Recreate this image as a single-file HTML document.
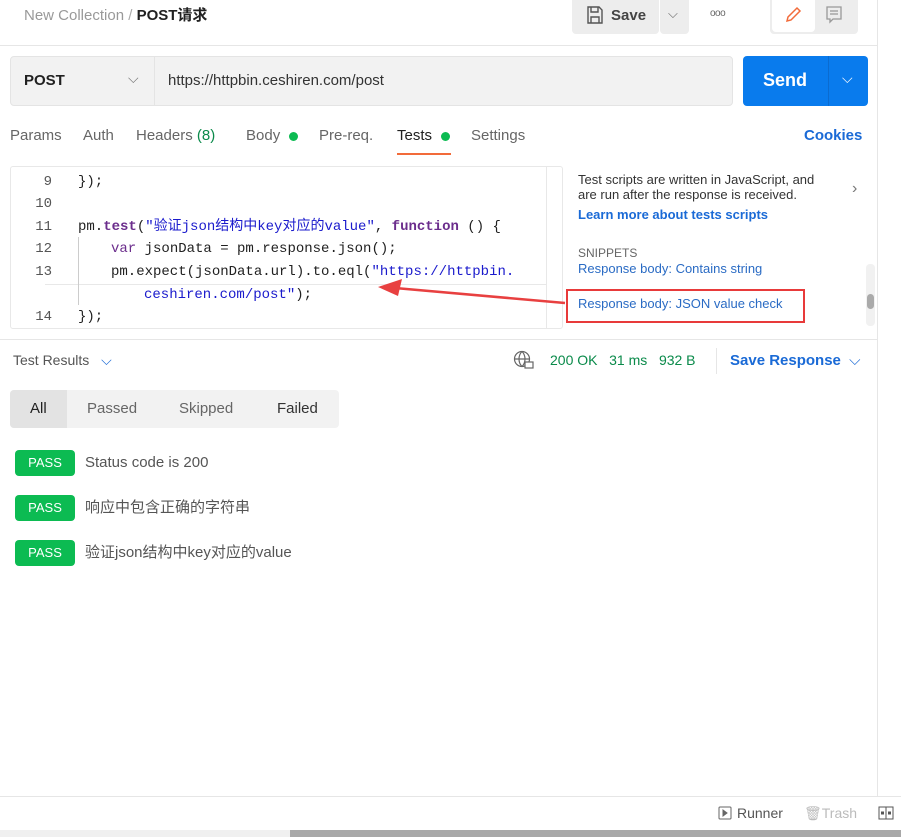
<!DOCTYPE html>
<html><head><meta charset="utf-8"><style>
*{box-sizing:border-box;margin:0;padding:0}
body{width:901px;height:837px;overflow:hidden;background:#fff;font-family:"Liberation Sans","Noto Sans CJK SC",sans-serif;position:relative;color:#212121}
.a{position:absolute}
.mono{font-family:"Liberation Mono","Noto Sans CJK SC",monospace;font-size:14px;line-height:18px;height:18px}
.ln{position:absolute;left:20px;width:32px;text-align:right;color:#555;font-family:"Liberation Mono",monospace;font-size:14px;line-height:18px}
.cl{position:absolute;white-space:nowrap}
.pass{position:absolute;left:15px;width:60px;height:26px;background:#0cbb52;color:#fff;border-radius:4px;font-size:13px;text-align:center;line-height:26px}
.tr{position:absolute;left:85px;font-size:15px;color:#555;line-height:18px}
.tab{position:absolute;top:127px;font-size:15px;color:#666}
</style></head><body>
<div class="a" style="left:24px;top:6px;font-size:15px;color:#999;line-height:20px">New Collection <span style="color:#aaa">/</span> <span style="color:#212121;font-weight:bold">POST请求</span></div>
<div class="a" style="left:572px;top:0;width:87px;height:34px;background:#ededed;border-radius:0 0 4px 4px"></div>
<svg class="a" style="left:585px;top:5px" width="20" height="20" viewBox="0 0 20 20" fill="none" stroke="#555" stroke-width="1.4"><path d="M3 2h11l3 3v13H3z M6 2v5h7V2 M6 18v-6h8v6"/></svg>
<div class="a" style="left:611px;top:7px;font-size:15px;color:#444;font-weight:bold">Save</div>
<div class="a" style="left:660px;top:0;width:29px;height:34px;background:#ededed;border-radius:0 0 4px 4px"></div>
<div class="a" style="left:668px;top:6px;font-size:13px;color:#666">⌵</div>
<div class="a" style="left:710px;top:8px;font-size:10px;color:#666;letter-spacing:-0.5px">ooo</div>
<div class="a" style="left:770px;top:0;width:88px;height:34px;background:#ededed;border-radius:0 0 4px 4px"></div>
<div class="a" style="left:772px;top:0;width:43px;height:32px;background:#fff;border-radius:0 0 4px 4px"></div>
<svg class="a" style="left:783px;top:5px" width="20" height="20" viewBox="0 0 20 20" fill="none" stroke="#f26b3a" stroke-width="1.5"><path d="M4 16l1-4L14 3l3 3-9 9z"/></svg>
<svg class="a" style="left:824px;top:5px" width="20" height="20" viewBox="0 0 20 20" fill="none" stroke="#999" stroke-width="1.3"><path d="M3 2h14v12H9l-3 3v-3H3z M6 6h8 M6 9h8"/></svg>
<div class="a" style="left:877px;top:0;width:1px;height:797px;background:#e6e6e6"></div>
<div class="a" style="left:0;top:45px;width:877px;height:1px;background:#e6e6e6"></div>
<div class="a" style="left:10px;top:56px;width:723px;height:50px;background:#f2f2f2;border:1px solid #e4e4e4;border-radius:4px"></div>
<div class="a" style="top:56px;width:1px;height:50px;background:#e4e4e4;left:154px"></div>
<div class="a" style="left:24px;top:72px;font-size:15px;font-weight:bold">POST</div>
<div class="a" style="left:128px;top:70px;font-size:14px;color:#777">⌵</div>
<div class="a" style="left:168px;top:72px;font-size:15px;color:#333">https://httpbin.ceshiren.com/post</div>
<div class="a" style="left:743px;top:56px;width:125px;height:50px;background:#097bed;border-radius:4px"></div>
<div class="a" style="left:828px;top:56px;width:1px;height:50px;background:#0a6bd0"></div>
<div class="a" style="left:763px;top:70px;font-size:18px;font-weight:bold;color:#fff">Send</div>
<div class="a" style="left:842px;top:70px;font-size:14px;color:#fff">⌵</div>
<div class="tab" style="left:10px">Params</div>
<div class="tab" style="left:83px">Auth</div>
<div class="tab" style="left:136px">Headers <span style="color:#0a8a4a">(8)</span></div>
<div class="tab" style="left:246px">Body</div>
<div class="a" style="left:289px;top:132px;width:9px;height:9px;border-radius:50%;background:#0cbb52"></div>
<div class="tab" style="left:319px">Pre-req.</div>
<div class="tab" style="left:397px;color:#212121">Tests</div>
<div class="a" style="left:441px;top:132px;width:9px;height:9px;border-radius:50%;background:#0cbb52"></div>
<div class="a" style="left:397px;top:153px;width:54px;height:2px;background:#f26b3a"></div>
<div class="tab" style="left:471px">Settings</div>
<div class="a" style="left:804px;top:127px;font-size:15px;font-weight:bold;color:#1a6ad6">Cookies</div>
<div class="a" style="left:10px;top:166px;width:553px;height:163px;border:1px solid #e8e8e8;border-radius:3px"></div>
<div class="a" style="left:546px;top:167px;width:1px;height:161px;background:#e8e8e8"></div>
<div class="ln" style="top:173px">9</div><div class="ln" style="top:195px">10</div><div class="ln" style="top:218px">11</div><div class="ln" style="top:240px">12</div><div class="ln" style="top:263px">13</div><div class="ln" style="top:308px">14</div>
<div class="a" style="left:45px;top:284px;width:502px;height:1px;background:#e8e8e8"></div>
<div class="a" style="left:78px;top:237px;width:1px;height:68px;background:#ccc"></div>
<div class="cl mono" style="left:78px;top:173px">});</div>
<div class="cl mono" style="left:78px;top:218px">pm.<b style="color:#6b2d8c">test</b>(<span style="color:#1a1acc">"验证json结构中key对应的value"</span>, <b style="color:#6b2d8c">function</b> () {</div>
<div class="cl mono" style="left:111px;top:240px"><span style="color:#6b2d8c">var</span> jsonData = pm.response.json();</div>
<div class="cl mono" style="left:111px;top:263px">pm.expect(jsonData.url).to.eql(<span style="color:#1a1acc">"https://httpbin.</span></div>
<div class="cl mono" style="left:144px;top:286px"><span style="color:#1a1acc">ceshiren.com/post"</span>);</div>
<div class="cl mono" style="left:78px;top:308px">});</div>
<svg class="a" style="left:0;top:0" width="901" height="837"><path d="M565 303 L395 288" stroke="#e84040" stroke-width="2.5"/><path d="M378 287 L402 279 L398 296 Z" fill="#e84040"/><rect x="567" y="290" width="237" height="32" fill="none" stroke="#e83a3a" stroke-width="2"/></svg>
<div class="a" style="left:578px;top:172px;font-size:13px;color:#333;line-height:15px">Test scripts are written in JavaScript, and<br>are run after the response is received.</div>
<div class="a" style="left:852px;top:180px;font-size:16px;color:#777">›</div>
<div class="a" style="left:578px;top:207px;font-size:13px;font-weight:bold;color:#1a6ad6">Learn more about tests scripts</div>
<div class="a" style="left:578px;top:246px;font-size:12px;color:#666">SNIPPETS</div>
<div class="a" style="left:578px;top:261px;font-size:13px;color:#2a6bc4">Response body: Contains string</div>
<div class="a" style="left:578px;top:296px;font-size:13px;color:#2a6bc4">Response body: JSON value check</div>
<div class="a" style="left:866px;top:264px;width:9px;height:62px;background:#f1f1f1;border-radius:4px"></div>
<div class="a" style="left:867px;top:294px;width:7px;height:15px;background:#aaa;border-radius:4px"></div>
<div class="a" style="left:0;top:339px;width:877px;height:1px;background:#e6e6e6"></div>
<div class="a" style="left:13px;top:352px;font-size:14px;color:#555">Test Results <span style="color:#1a6ad6;margin-left:8px">⌵</span></div>
<svg class="a" style="left:513px;top:350px" width="22" height="20" viewBox="0 0 22 20" fill="none" stroke="#666" stroke-width="1.2"><circle cx="9" cy="9" r="7.5"/><path d="M1.5 9h15 M9 1.5c-4 4-4 11 0 15 M9 1.5c4 4 4 11 0 15"/><rect x="12" y="12" width="8" height="6" fill="#fff"/></svg>
<div class="a" style="left:550px;top:352px;font-size:14px;color:#0a8a4a;white-space:nowrap">200 OK&nbsp;&nbsp;&nbsp;31 ms&nbsp;&nbsp;&nbsp;932 B</div>
<div class="a" style="left:716px;top:348px;width:1px;height:26px;background:#e6e6e6"></div>
<div class="a" style="left:730px;top:352px;font-size:15px;font-weight:bold;color:#1a6ad6">Save Response <span style="margin-left:4px;font-weight:normal">⌵</span></div>
<div class="a" style="left:10px;top:390px;width:329px;height:38px;background:#f2f2f2;border-radius:4px"></div>
<div class="a" style="left:10px;top:390px;width:57px;height:38px;background:#e3e3e3;border-radius:4px 0 0 4px"></div>
<div class="a" style="left:30px;top:400px;font-size:15px;color:#212121">All</div>
<div class="a" style="left:87px;top:400px;font-size:15px;color:#666">Passed</div>
<div class="a" style="left:179px;top:400px;font-size:15px;color:#666">Skipped</div>
<div class="a" style="left:277px;top:400px;font-size:15px;color:#333">Failed</div>
<div class="pass" style="top:450px">PASS</div><div class="tr" style="top:454px">Status code is 200</div>
<div class="pass" style="top:495px">PASS</div><div class="tr" style="top:499px">响应中包含正确的字符串</div>
<div class="pass" style="top:540px">PASS</div><div class="tr" style="top:544px">验证json结构中key对应的value</div>
<div class="a" style="left:0;top:796px;width:901px;height:1px;background:#e6e6e6"></div>
<svg class="a" style="left:718px;top:806px" width="14" height="14" viewBox="0 0 14 14" fill="none" stroke="#666"><rect x="1" y="1" width="12" height="12" rx="1"/><path d="M5 4l4 3-4 3z" fill="#666"/></svg>
<div class="a" style="left:737px;top:805px;font-size:14px;color:#555">Runner</div>
<div class="a" style="left:804px;top:805px;font-size:14px;color:#bbb">🗑Trash</div>
<svg class="a" style="left:878px;top:805px" width="16" height="16" viewBox="0 0 16 16" fill="none" stroke="#555"><rect x="1" y="2" width="14" height="12"/><path d="M8 2v12"/><rect x="3.5" y="7" width="2" height="2" fill="#555"/><rect x="10.5" y="7" width="2" height="2" fill="#555"/></svg>
<div class="a" style="left:0;top:830px;width:901px;height:7px;background:#f0f0f0"></div>
<div class="a" style="left:290px;top:830px;width:611px;height:7px;background:#a8a8a8"></div>
</body></html>
